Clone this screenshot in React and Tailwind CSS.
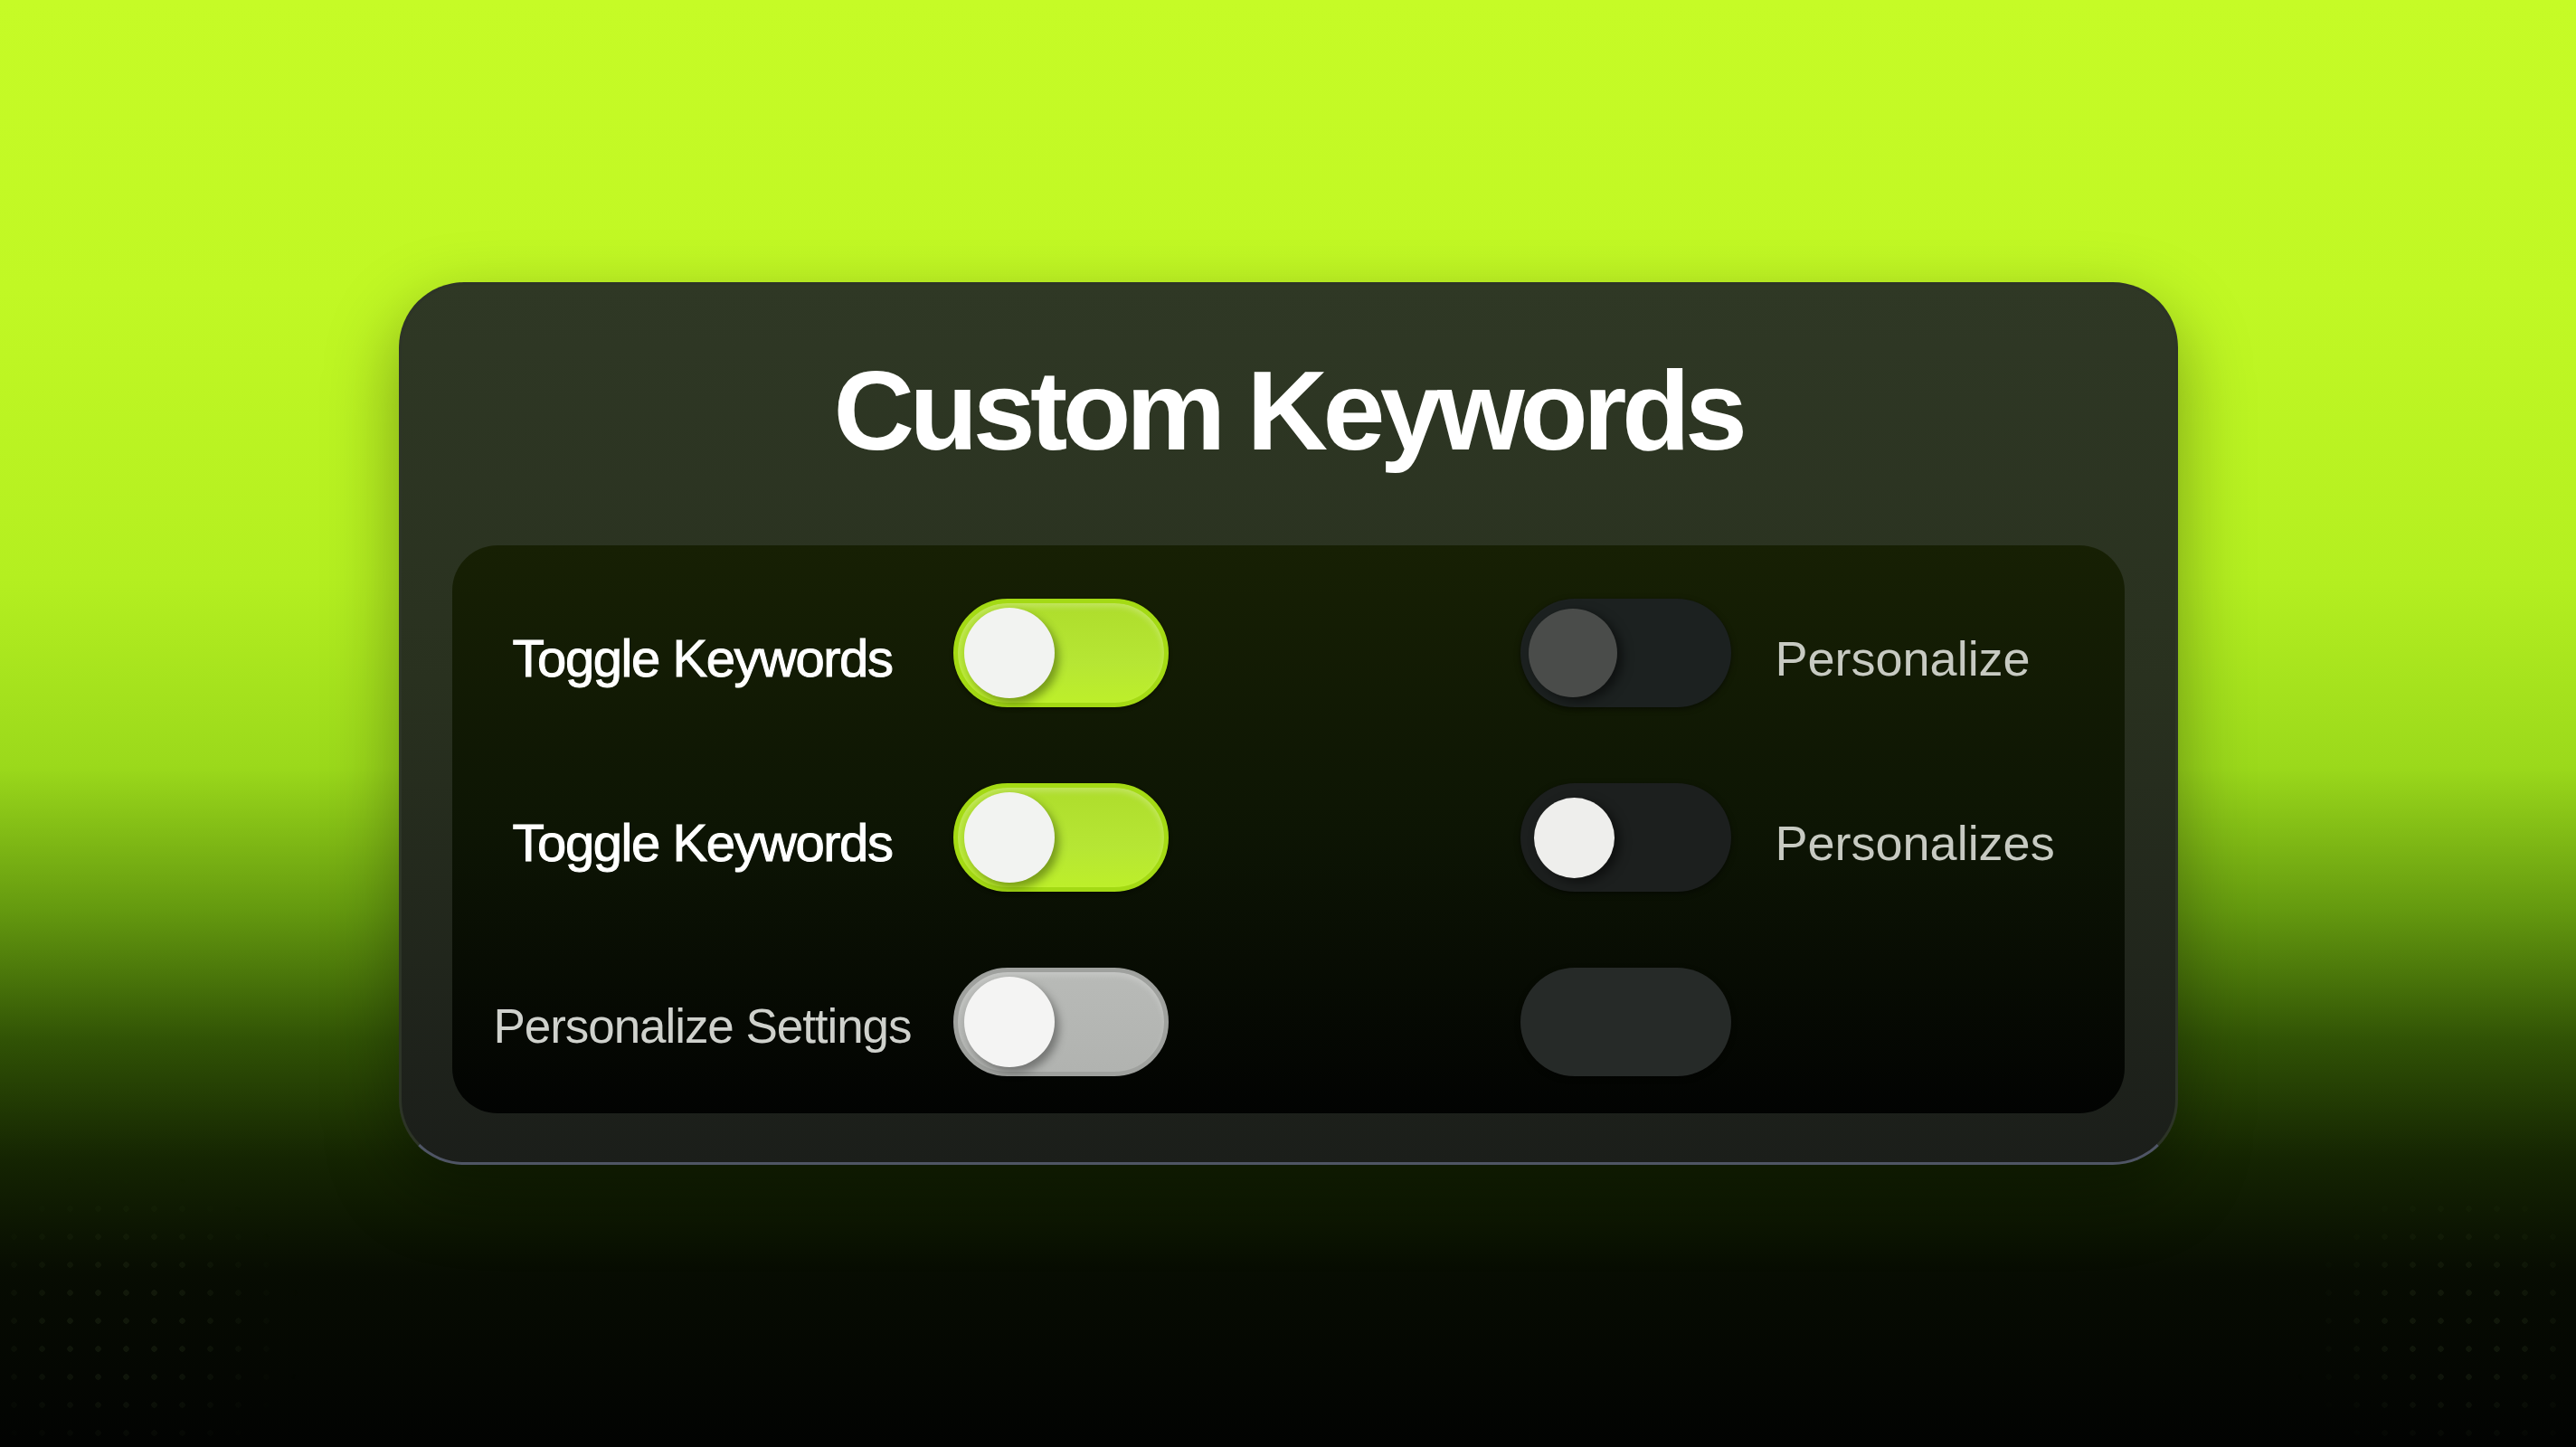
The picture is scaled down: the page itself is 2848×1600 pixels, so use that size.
import React from "react";

const Toggle = ({ variant }) => {
  if (variant === "on") {
    return (
      <div className="relative w-[238px] h-[120px] shrink-0 rounded-full border-[5px] border-[#a4da14] bg-[linear-gradient(180deg,#aedd2c_0%,#b6e634_60%,#bdef2a_100%)] shadow-[inset_0_4px_6px_rgba(255,255,255,0.25),0_2px_4px_rgba(0,0,0,0.4)]">
        <div className="absolute left-[7px] top-[5px] w-[100px] h-[100px] rounded-full bg-[#f2f3f1] shadow-[5px_6px_10px_rgba(40,60,0,0.45)]" />
      </div>
    );
  }
  if (variant === "gray") {
    return (
      <div className="relative w-[238px] h-[120px] shrink-0 rounded-full border-[5px] border-[#9fa19e] bg-[linear-gradient(180deg,#b8bab7_0%,#b1b3b0_100%)] shadow-[inset_0_4px_6px_rgba(255,255,255,0.2)]">
        <div className="absolute left-[7px] top-[5px] w-[100px] h-[100px] rounded-full bg-[#f4f4f3] shadow-[5px_6px_10px_rgba(0,0,0,0.35)]" />
      </div>
    );
  }
  if (variant === "dark") {
    return (
      <div className="relative w-[233px] h-[120px] shrink-0 rounded-full bg-[#1c2120] shadow-[0_2px_6px_rgba(0,0,0,0.5)]">
        <div className="absolute left-[9px] top-[11px] w-[98px] h-[98px] rounded-full bg-[#4a4c4a] shadow-[6px_4px_12px_rgba(0,0,0,0.5)]" />
      </div>
    );
  }
  if (variant === "darkWhite") {
    return (
      <div className="relative w-[233px] h-[120px] shrink-0 rounded-full bg-[#1c1f1e] shadow-[0_2px_6px_rgba(0,0,0,0.5)]">
        <div className="absolute left-[15px] top-[16px] w-[89px] h-[89px] rounded-full bg-[#eeeeec] shadow-[6px_4px_12px_rgba(0,0,0,0.5)]" />
      </div>
    );
  }
  return (
    <div className="w-[233px] h-[120px] shrink-0 rounded-full bg-[#262a28] shadow-[0_2px_6px_rgba(0,0,0,0.4)]" />
  );
};

const rows = [
  { left: "Toggle Keywords", leftTone: "white", leftToggle: "on", rightToggle: "dark", right: "Personalize" },
  { left: "Toggle Keywords", leftTone: "white", leftToggle: "on", rightToggle: "darkWhite", right: "Personalizes" },
  { left: "Personalize Settings", leftTone: "gray", leftToggle: "gray", rightToggle: "empty", right: "" },
];

export default function App() {
  return (
    <div className="relative w-full h-[1600px] overflow-hidden flex justify-center bg-[linear-gradient(180deg,#c6fb26_0%,#c1f824_20%,#b4ef20_40%,#9bd91b_53%,#64990f_63%,#305205_72%,#152502_80%,#070c02_88%,#020302_100%)] font-['Liberation_Sans',Arial,sans-serif]">
      {/* faint dot grids */}
      <div className="absolute left-0 top-[1290px] w-[340px] h-[300px] bg-[radial-gradient(circle,rgba(120,150,90,0.1)_3px,transparent_3.5px)] bg-[length:31px_31px] [mask-image:radial-gradient(ellipse_at_40%_60%,black_20%,transparent_70%)]" />
      <div className="absolute right-0 top-[1290px] w-[320px] h-[300px] bg-[radial-gradient(circle,rgba(120,150,90,0.1)_3px,transparent_3.5px)] bg-[length:31px_31px] [mask-image:radial-gradient(ellipse_at_60%_60%,black_20%,transparent_70%)]" />

      <div className="relative mt-[312px] w-[1967px] h-[976px] rounded-[72px] border-[3px] border-[#2d3427] border-b-[#4f5565] bg-[linear-gradient(180deg,#2f3825_0%,#29311f_45%,#1b1e1a_100%)] shadow-[0_30px_80px_rgba(0,0,0,0.35)] px-[56px] pb-[54px] flex flex-col">
        <h1 className="pt-[77px] pb-[87px] text-center text-white font-bold text-[124px] leading-[124px] tracking-[-0.045em]">
          Custom Keywords
        </h1>

        <div className="flex-1 rounded-[50px] bg-[linear-gradient(180deg,#172004_0%,#0d1504_50%,#020302_100%)] pt-[60px] pb-[42px] pl-[46px] flex flex-col gap-[86px]">
          {rows.map((r, i) => (
            <div key={i} className="flex items-center h-[118px]">
              <div
                className={
                  r.leftTone === "white"
                    ? "w-[462px] pt-[10px] text-center text-[58px] tracking-[-0.025em] text-white [-webkit-text-stroke:1px_#ffffff]"
                    : "w-[462px] pt-[10px] text-center text-[53px] tracking-[-0.02em] text-[#cfd1cc]"
                }
              >
                {r.left}
              </div>
              <div className="ml-[46px]">
                <Toggle variant={r.leftToggle} />
              </div>
              <div className="ml-[389px]">
                <Toggle variant={r.rightToggle} />
              </div>
              {r.right && (
                <div className="ml-[49px] pt-[12px] text-[54px] text-[#c7cac2]">{r.right}</div>
              )}
            </div>
          ))}
        </div>
      </div>
    </div>
  );
}
